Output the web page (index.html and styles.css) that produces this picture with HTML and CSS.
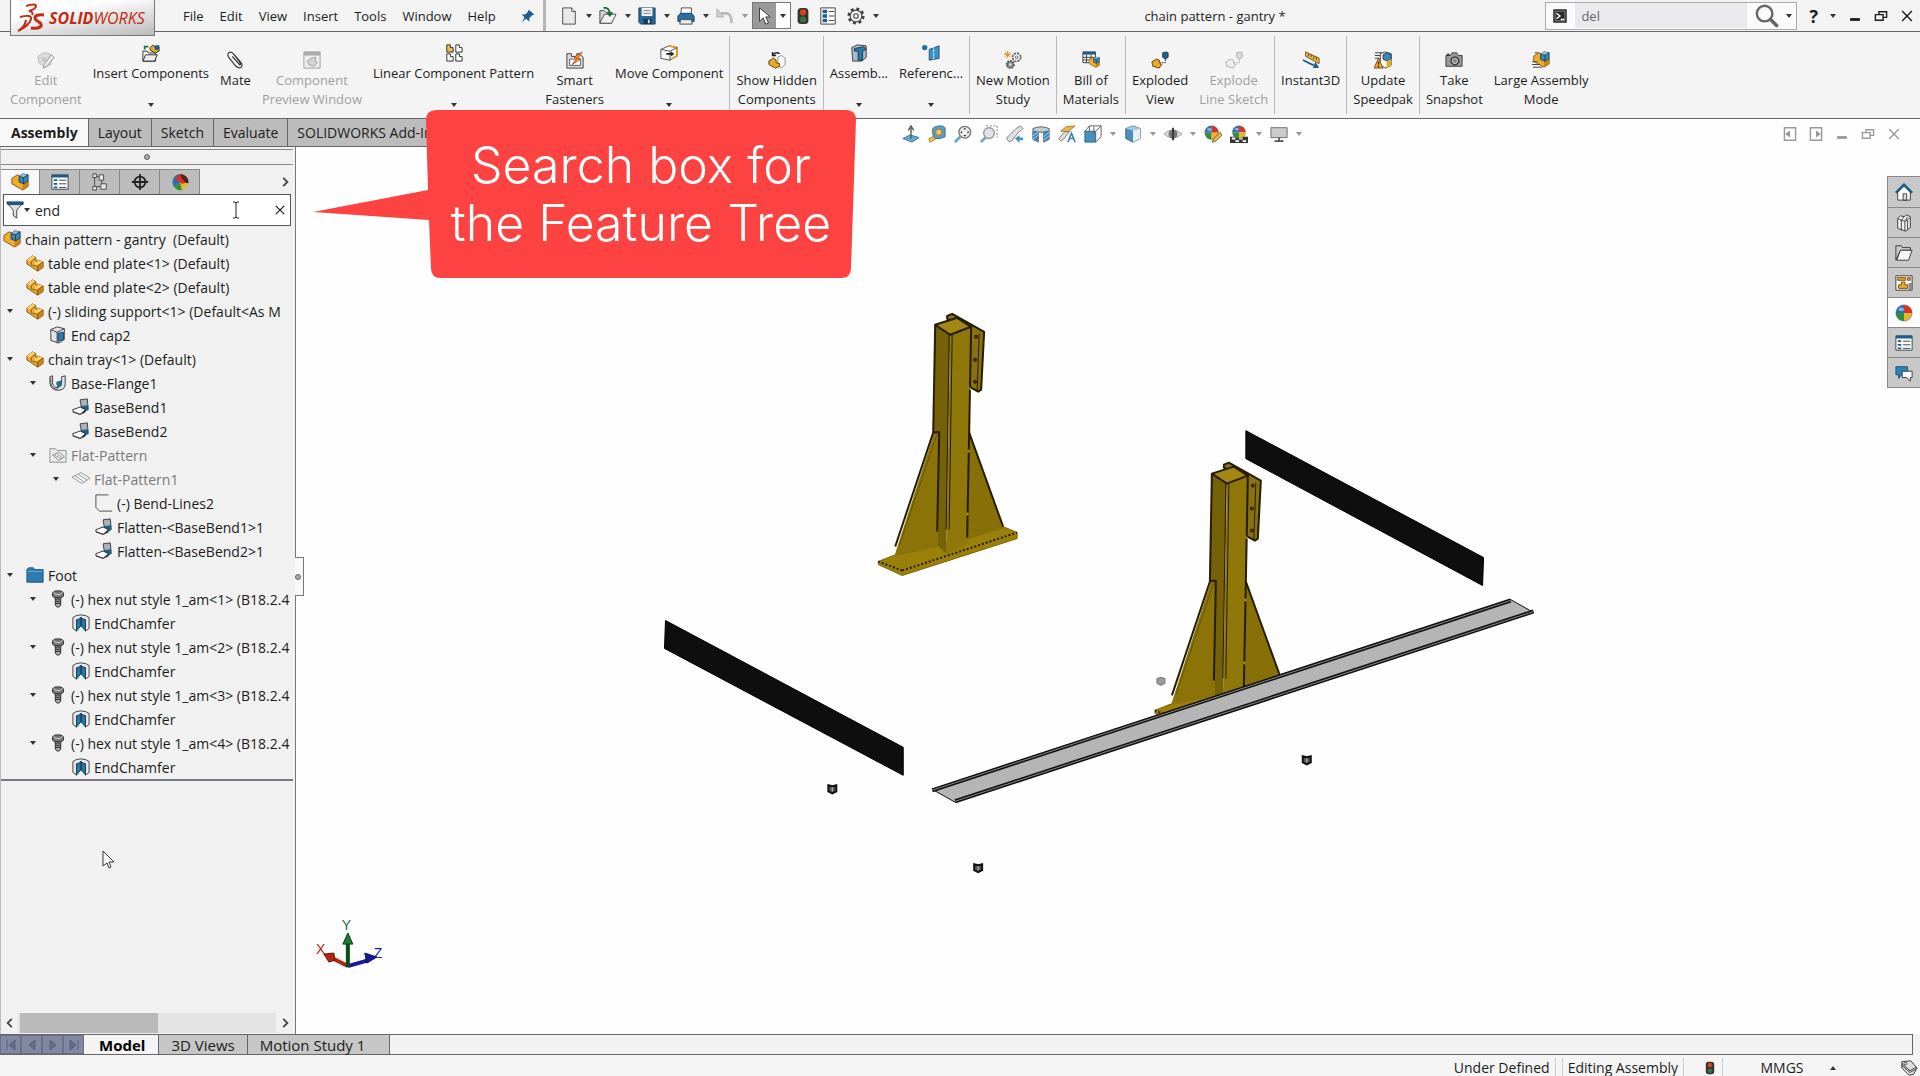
FILE: index.html
```html
<!DOCTYPE html>
<html lang="en">
<head>
    <meta charset="UTF-8">
    <meta name="viewport" content="width=device-width, initial-scale=1.0">
    <title>chain pattern - gantry *</title>
    <link rel="stylesheet" href="styles.css">
</head>
<body>
    <!-- Icon sprite -->
    <svg class="sprite" aria-hidden="true">
        <symbol id="i-part" viewBox="0 0 20 20">
            <path d="M1 7l6-5 4 2v4l3-1 5 2v6l-6 4L1 11z" fill="#f0ad2c" stroke="#7a4f0a" stroke-linejoin="round"/>
            <path d="M7 2l4 2-5 4-5-1zM14 7l5 2-6 4-5-2z" fill="#fbd06a"/>
            <path d="M13 13l6-4v6l-6 4z" fill="#c98412"/>
            <path d="M6 8l5-4M6 8v4l7 2M13 13v6M13 13l6-4" fill="none" stroke="#7a4f0a"/>
        </symbol>
        <symbol id="i-asm" viewBox="0 0 20 20">
            <path d="M1 6l6-4 4 2v4l8 1v6l-6 4L1 12z" fill="#f0ad2c" stroke="#7a4f0a" stroke-linejoin="round"/>
            <path d="M13 13l6-3v5l-6 4z" fill="#c98412"/>
            <path d="M9 4l4-3 6 1v7l-5 3-5-2z" fill="#3b87b8" stroke="#173a55" stroke-linejoin="round"/>
            <path d="M9 4l4-3 6 1-5 3z" fill="#8fc2e0"/>
            <path d="M9 4l5 1 5-3M14 5v7" fill="none" stroke="#173a55"/>
        </symbol>
        <symbol id="i-props" viewBox="0 0 20 20">
            <path d="M1 2h18v16H1z" fill="#fff" stroke="#2c3e50"/>
            <path d="M1 2h18v3H1z" fill="#1c5d8c"/>
            <path d="M3 7h4v2H3zM3 11h4v2H3zM3 15h4v2H3z" fill="#1c5d8c"/>
            <path d="M9 8h8M9 12h8M9 16h8" stroke="#333"/>
        </symbol>
        <symbol id="i-config" viewBox="0 0 20 20">
            <path d="M4 2v16M4 4h6M4 15h6" stroke="#444" fill="none"/>
            <path d="M2 1h4v4H2zM2 15h4v4H2zM9 2h5v6H9zM11 12h6v6h-6z" fill="#e6e6e6" stroke="#444"/>
            <path d="M12 8v4" stroke="#444"/>
        </symbol>
        <symbol id="i-target" viewBox="0 0 20 20">
            <circle cx="10" cy="10" r="6" fill="none" stroke="#222" stroke-width="2"/>
            <path d="M10 1v18M1 10h18" stroke="#222" stroke-width="2"/>
        </symbol>
        <symbol id="i-ball" viewBox="0 0 20 20">
            <path d="M10 10V1a9 9 0 0 0-9 9z" fill="#2a6fc4"/>
            <path d="M10 10h9a9 9 0 0 0-9-9z" fill="#d5342a"/>
            <path d="M10 10H1a9 9 0 0 0 9 9z" fill="#2f9238"/>
            <path d="M10 10v9a9 9 0 0 0 9-9z" fill="#eab42e"/>
            <circle cx="10" cy="10" r="9" fill="none" stroke="#444" stroke-opacity=".5"/>
            <ellipse cx="7" cy="6" rx="3" ry="2" fill="#fff" fill-opacity=".45"/>
        </symbol>
        <symbol id="i-display" viewBox="0 0 20 20">
            <circle cx="10" cy="10" r="9" fill="#eab42e"/>
            <path d="M10 10V1a9 9 0 0 0-6 15z" fill="#2a6fc4"/>
            <path d="M10 1a9 9 0 0 1 9 9l-6 2-8-4a9 9 0 0 1 5-7z" fill="#d5342a"/>
            <path d="M4 16l6-6 2 9a9 9 0 0 1-8-3z" fill="#2f9238"/>
            <path d="M11 2q8 1 8 9-5-1-8-9z" fill="#4a2a20" stroke="#222"/>
        </symbol>
        <symbol id="i-funnel" viewBox="0 0 20 20">
            <path d="M1 2h18l-7 8v9l-4-3v-6z" fill="#dfe3e6" stroke="#333"/>
            <path d="M1 1h18v3H2z" fill="#1c5d8c" stroke="#12405f"/>
        </symbol>
        <symbol id="i-cap" viewBox="0 0 20 20">
            <path d="M2 4l7-3 8 2v12l-6 4-9-3z" fill="#dfe4e8" stroke="#333" stroke-linejoin="round"/>
            <path d="M2 4l7 3v12M9 7l8-4" fill="none" stroke="#333"/>
            <path d="M10 8l6-1v8l-6 2z" fill="#2f7bad" stroke="#173a55"/>
        </symbol>
        <symbol id="i-flange" viewBox="0 0 20 20">
            <path d="M1 3l3-1v8q1 6 6 5 4-1 4-5V3l4-1v9q0 7-8 7-8 0-9-8z" fill="#dde3e7" stroke="#333"/>
            <path d="M2 4v6q1 7 8 7" fill="none" stroke="#555"/>
            <path d="M8 9l6-2v6l-5 2z" fill="#25698f"/>
        </symbol>
        <symbol id="i-bend" viewBox="0 0 20 20">
            <path d="M9 2l8-1 1 12-7 1z" fill="#aab3ba" stroke="#333"/>
            <path d="M10 9l8-1v5l-6 4-3-4z" fill="#1f5f8b"/>
            <path d="M1 13l8-3 6 3-6 5-8-3z" fill="#fff" stroke="#222" stroke-linejoin="round"/>
            <path d="M1 15l8 3 6-4v2l-6 3-8-3z" fill="#444"/>
        </symbol>
        <symbol id="i-flatfolder" viewBox="0 0 20 20">
            <path d="M1 3h6l2 2h10v13H1z" fill="#ebebeb" stroke="#8a8a8a"/>
            <path d="M4 10l7-3 6 5-6 4z" fill="#fff" stroke="#777"/>
            <path d="M6 10l7 4M9 9l6 4" stroke="#777"/>
        </symbol>
        <symbol id="i-flat" viewBox="0 0 20 20">
            <path d="M0 8l10-5 10 6-9 6z" fill="#f4f4f4" stroke="#909090"/>
            <path d="M3 6l10 7M7 5l10 6" stroke="#909090"/>
        </symbol>
        <symbol id="i-sketch" viewBox="0 0 20 20">
            <path d="M15 1H1v14l4 4h14" fill="none" stroke="#444"/>
        </symbol>
        <symbol id="i-folder" viewBox="0 0 20 20">
            <path d="M1 4l2-2h5l2 2h9v14H1z" fill="#2f7bad" stroke="#1a4f74"/>
            <path d="M2 6h16" stroke="#6fb0d8"/>
        </symbol>
        <symbol id="i-bolt" viewBox="0 0 20 20">
            <path d="M4 3l3-2h6l3 2v4l-3 2H7L4 7z" fill="#777" stroke="#222"/>
            <path d="M5 3l3 2h4l3-2" fill="none" stroke="#ddd"/>
            <path d="M7 9h6v8l-2 2H9l-2-2z" fill="#aaa" stroke="#222"/>
            <path d="M7 11h6M7 13h6M7 15h6" stroke="#222"/>
        </symbol>
        <symbol id="i-chamfer" viewBox="0 0 20 20">
            <path d="M1 4q3-3 9-3t9 3v12l-4 3V6h-2l-3-2-3 2H5v13l-4-3z" fill="#e7ebee" stroke="#333" stroke-linejoin="round"/>
            <path d="M5 8l5-4v9l-5 6zM15 8l-5-4v9l5 6z" fill="#2878aa" stroke="#173a55"/>
        </symbol>
        <symbol id="i-edit" viewBox="0 0 20 20">
            <path d="M1 6l6-4 7 1 3 4-2 8-6 3-7-5z" fill="#dcdcdc" stroke="#b5b5b5"/>
            <path d="M16 4l3 3-8 10-4 2 1-4z" fill="#eee" stroke="#8f8f8f"/>
            <path d="M5 7h5v5H5z" fill="#c9c9c9"/>
        </symbol>
        <symbol id="i-insert" viewBox="0 0 20 20">
            <path d="M1 8h5l1 2h8v9H1z" fill="#fff" stroke="#222"/>
            <path d="M4 12h13l-3 7H1z" fill="#eee" stroke="#222"/>
            <path d="M3 6V3h4" stroke="#137a3a" stroke-width="2" fill="none"/>
            <path d="M9 4l3-3 2 2h5v5l-4 2-6-3z" fill="#eba92a" stroke="#333"/>
            <path d="M13 2l6-1v5l-4 1z" fill="#1f5f8b"/>
        </symbol>
        <symbol id="i-clip" viewBox="0 0 20 20">
            <path d="M7 6l7 8q1 2 2 1 0-1-1-3L9 4Q6 0 3 2q-2 2 0 5l8 10q4 3 6 1 2-3-1-6L9 4" fill="none" stroke="#333" stroke-width="1.3"/>
        </symbol>
        <symbol id="i-preview" viewBox="0 0 20 20">
            <path d="M1 1h18v18H1z" fill="#eee" stroke="#999"/>
            <path d="M1 1h18v4H1z" fill="#aaa"/>
            <path d="M5 11l4-3 5-1v5l2 1-4 4-6-2z" fill="#d3d3d3" stroke="#999"/>
        </symbol>
        <symbol id="i-pattern" viewBox="0 0 20 20">
            <path d="M2 1h4v3h3v5H2z" fill="#f2c04c" stroke="#222"/>
            <path d="M12 1h4v3h3v5h-7zM2 11h4v3h3v5H2zM12 11h4v3h3v5h-7z" fill="#fff" stroke="#222"/>
        </symbol>
        <symbol id="i-smart" viewBox="0 0 20 20">
            <path d="M1 3h5v3h6V3h3l4 4v12H1z" fill="#ddd" stroke="#333"/>
            <path d="M4 9h12v7H4z" fill="#fff" stroke="#555"/>
            <path d="M18 1l-9 6 3 1-5 7 9-6-3-1z" fill="#f09a2a" stroke="#b34a12"/>
        </symbol>
        <symbol id="i-move" viewBox="0 0 20 20">
            <path d="M1 6l9-4 9 2v9l-8 5-10-2z" fill="#fff" stroke="#444"/>
            <path d="M10 2l9 2v9l-7 4" fill="none" stroke="#d99a24" stroke-width="2"/>
            <path d="M1 6l10 2v10M11 8l8-4" fill="none" stroke="#444"/>
            <path d="M7 11h6" stroke="#222" stroke-width="2"/>
            <path d="M12 8l4 3-4 3z" fill="#222"/>
        </symbol>
        <symbol id="i-hidden" viewBox="0 0 20 20">
            <path d="M11 7l4-2 4 3v7l-4 4-4-3z" fill="#fff" stroke="#888"/>
            <path d="M1 11l5-3 3 2v3l4 1v3l-5 2-7-4z" fill="#eba92a" stroke="#5a3a06"/>
            <path d="M5 5q3-5 8-2M5 1v4h4" fill="none" stroke="#222" stroke-width="1.5"/>
        </symbol>
        <symbol id="i-asmfeat" viewBox="0 0 20 20">
            <path d="M2 4l6-3 10 1v13l-5 4H3z" fill="#aebbc4" stroke="#333"/>
            <path d="M5 5l10-2 3 3-4 2v10H9V8H5z" fill="#2878aa" stroke="#153c57"/>
        </symbol>
        <symbol id="i-refgeo" viewBox="0 0 20 20">
            <circle cx="3" cy="4" r="3" fill="#1f6fa5"/>
            <path d="M8 6l11-4v14L8 18z" fill="#3e8fc2" stroke="#1c567d"/>
            <path d="M13 2v18" stroke="#fff" stroke-dasharray="3 1"/>
        </symbol>
        <symbol id="i-gear" viewBox="0 0 20 20">
            <circle cx="10" cy="10" r="8" fill="none" stroke="#444" stroke-width="3" stroke-dasharray="3.3 3"/>
            <circle cx="10" cy="10" r="6.5" fill="#f4f4f4" stroke="#444" stroke-width="1.3"/>
            <circle cx="10" cy="10" r="2.5" fill="#fff" stroke="#444" stroke-width="1.3"/>
        </symbol>
        <symbol id="i-motion" viewBox="0 0 20 20">
            <circle cx="14" cy="7" r="4.5" fill="#fff" stroke="#666" stroke-width="2" stroke-dasharray="2.5 1"/>
            <circle cx="14" cy="7" r="1.5" fill="none" stroke="#555"/>
            <circle cx="7" cy="15" r="4" fill="#888" stroke="#555" stroke-width="2" stroke-dasharray="2 1"/>
            <circle cx="7" cy="15" r="1.5" fill="#ddd"/>
            <path d="M4 0v8M0 4h8M1 1l6 6M7 1L1 7" stroke="#e08a1e"/>
        </symbol>
        <symbol id="i-bom" viewBox="0 0 20 20">
            <path d="M1 1h14v12H1z" fill="#fff" stroke="#333"/>
            <path d="M1 1h14v3H1z" fill="#1c5d8c"/>
            <path d="M1 7h14M1 10h14M5 4v9M10 4v9" stroke="#333"/>
            <use href="#i-asm" x="7" y="6" width="13" height="13"/>
        </symbol>
        <symbol id="i-explode" viewBox="0 0 20 20">
            <path d="M1 12l5-3 3 1 1 4 2 1-3 4-7-2z" fill="#eba92a" stroke="#5a3a06"/>
            <path d="M13 2l4-1 2 1v5l-3 2-3-2z" fill="#1f5f8b" stroke="#173a55"/>
            <path d="M16 9v4h-6" fill="none" stroke="#222" stroke-dasharray="2 1"/>
        </symbol>
        <symbol id="i-explodeline" viewBox="0 0 20 20">
            <path d="M1 12l5-3 3 1 1 4 2 1-3 4-7-2z" fill="#eee" stroke="#aaa"/>
            <path d="M13 2l4-1 2 1v5l-3 2-3-2z" fill="#ddd" stroke="#aaa"/>
            <path d="M16 9v4h-6" fill="none" stroke="#aaa" stroke-dasharray="2 1"/>
        </symbol>
        <symbol id="i-instant" viewBox="0 0 20 20">
            <path d="M4 1l15 7v6L4 6z" fill="#f2bd45" stroke="#6b4a10"/>
            <path d="M7 3v3M10 4v3M13 6v3M16 7v3" stroke="#333"/>
            <path d="M1 10l12 6" stroke="#1c5d8c" stroke-width="2"/>
            <path d="M12 19l7 0-4-7z" fill="#1c5d8c"/>
        </symbol>
        <symbol id="i-speedpak" viewBox="0 0 20 20">
            <path d="M1 2h8M1 5h6M1 8h5" stroke="#333"/>
            <path d="M7 3l5-2 7 2v13l-6 3-6-3z" fill="#fff" stroke="#333"/>
            <path d="M10 4l5-2 4 2v5l-5 2-4-2z" fill="#3b87b8" stroke="#173a55"/>
            <path d="M14 11l5-2v7l-5 3z" fill="#eba92a"/>
            <path d="M5 8l5 11H0z" fill="#f4a52a" stroke="#7a4a08"/>
            <path d="M5 12v3M5 16v2" stroke="#222" stroke-width="1.5"/>
        </symbol>
        <symbol id="i-camera" viewBox="0 0 20 20">
            <path d="M1 5h5l2-3h5l2 3h4v12H1z" fill="#999" stroke="#333"/>
            <circle cx="11" cy="11" r="5" fill="#333"/>
            <circle cx="11" cy="11" r="3" fill="#888" stroke="#ddd"/>
            <path d="M2 3h3v2H2z" fill="#333"/>
        </symbol>
        <symbol id="i-large" viewBox="0 0 20 20">
            <use href="#i-asm" x="1" width="19" height="19"/>
            <path d="M0 12h6M0 15h8M1 18h10M3 2h4" stroke="#333"/>
        </symbol>
        <symbol id="i-pin" viewBox="0 0 20 20">
            <path d="M11 1l8 7-3 1-4 4v5l-5-4-6 5 4-7-4-4h5l4-4z" fill="#1c5d8c"/>
        </symbol>
        <symbol id="i-new" viewBox="0 0 20 20">
            <path d="M3 1h10l4 4v14H3z" fill="#e9e9e9" stroke="#444"/>
            <path d="M13 1v4h4" fill="#fff" stroke="#444"/>
        </symbol>
        <symbol id="i-open" viewBox="0 0 20 20">
            <path d="M1 4h5l2 2h6v12H1z" fill="#d5d5d5" stroke="#444"/>
            <path d="M6 8h13l-5 10H1z" fill="#f2f2f2" stroke="#444"/>
            <path d="M5 1q6-1 7 6" fill="none" stroke="#17713a" stroke-width="2"/>
            <path d="M8 6h8l-4 5z" fill="#17713a"/>
        </symbol>
        <symbol id="i-save" viewBox="0 0 20 20">
            <path d="M1 1h18v18H3l-2-2z" fill="#26699a" stroke="#143a56"/>
            <path d="M4 1h12v9H4z" fill="#f2f2f2"/>
            <path d="M6 4h8M6 7h8" stroke="#777"/>
            <path d="M6 13h9v6H6z" fill="#173a52"/>
            <path d="M11 14h2v4h-2z" fill="#ddd"/>
        </symbol>
        <symbol id="i-print" viewBox="0 0 20 20">
            <path d="M5 1h11v8H4z" fill="#fff" stroke="#444"/>
            <path d="M1 10l3-3h12l3 3v6H1z" fill="#2a6f9f" stroke="#143a56"/>
            <path d="M4 14h12l1 5H3z" fill="#e9e9e9" stroke="#444"/>
        </symbol>
        <symbol id="i-undo" viewBox="0 0 20 20">
            <path d="M3 7h9q6 1 5 11" fill="none" stroke="#b9b9b9" stroke-width="3"/>
            <path d="M1 2v9h8z" fill="#cfcfcf" stroke="#b0b0b0"/>
        </symbol>
        <symbol id="i-cursor" viewBox="0 0 20 20">
            <path d="M5 1v15l4-4 3 7 3-1-3-7h5z" fill="#fff" stroke="#333"/>
        </symbol>
        <symbol id="i-traffic" viewBox="0 0 20 20">
            <rect x="4" y="1" width="12" height="18" rx="4" fill="#38332f"/>
            <circle cx="10" cy="6" r="3.4" fill="#d8401f"/>
            <circle cx="10" cy="14" r="3.4" fill="#2c7a3f"/>
        </symbol>
        <symbol id="i-options" viewBox="0 0 20 20">
            <path d="M2 1h16v18H2z" fill="#fff" stroke="#333"/>
            <path d="M4 3h5v4H4zM4 8h5v4H4zM4 13h5v4H4z" fill="#1c5d8c"/>
            <path d="M11 5h6M11 10h6M11 15h6" stroke="#333"/>
        </symbol>
        <symbol id="i-console" viewBox="0 0 20 20">
            <path d="M1 1h18v18H1z" fill="#2b2b2b" stroke="#111"/>
            <path d="M3 3h14v14H3z" fill="none" stroke="#aaa"/>
            <path d="M5 6l5 4-5 4M11 15h5" stroke="#fff" stroke-width="2" fill="none"/>
        </symbol>
        <symbol id="i-search" viewBox="0 0 20 20">
            <circle cx="8" cy="8" r="6.5" fill="none" stroke="#666" stroke-width="2"/>
            <path d="M13 13l5 5" stroke="#666" stroke-width="3" stroke-linecap="round"/>
        </symbol>
        <symbol id="i-min" viewBox="0 0 20 20"><path d="M3 13h14v4H3z" fill="currentColor"/></symbol>
        <symbol id="i-restore" viewBox="0 0 20 20">
            <path d="M2 8h11v8H2zM7 8V4h11v8h-5" fill="none" stroke="currentColor" stroke-width="2"/>
        </symbol>
        <symbol id="i-close" viewBox="0 0 20 20">
            <path d="M3 3l14 14M17 3L3 17" stroke="currentColor" stroke-width="2"/>
        </symbol>
        <symbol id="i-paneleft" viewBox="0 0 20 20">
            <path d="M2 1h16v18H2z" fill="none" stroke="currentColor" stroke-width="2"/>
            <path d="M10 5v10l-7-5z" fill="currentColor"/>
        </symbol>
        <symbol id="i-paneright" viewBox="0 0 20 20">
            <path d="M2 1h16v18H2z" fill="none" stroke="currentColor" stroke-width="2"/>
            <path d="M10 5v10l7-5z" fill="currentColor"/>
        </symbol>
        <symbol id="i-chevleft" viewBox="0 0 20 20"><path d="M13 3l-7 7 7 7" fill="none" stroke="#444" stroke-width="3"/></symbol>
        <symbol id="i-chevright" viewBox="0 0 20 20"><path d="M7 3l7 7-7 7" fill="none" stroke="#444" stroke-width="3"/></symbol>
        <!-- Heads-up view toolbar -->
        <symbol id="h-normal" viewBox="0 0 20 20">
            <path d="M1 15l8-4 10 3-8 5z" fill="#6ba6cf" stroke="#3a7197"/>
            <path d="M10 15V3M7 6l3-5 3 5" fill="none" stroke="#555" stroke-width="1.5"/>
        </symbol>
        <symbol id="h-tape" viewBox="0 0 20 20">
            <path d="M5 5q1-4 9-4 5 0 5 3v9q-5 3-13 2z" fill="#5b9cc9" stroke="#38668a"/>
            <circle cx="12" cy="8" r="3.5" fill="#f0c65a" stroke="#a77a1d"/>
            <path d="M1 15l6-2 1 3-6 3z" fill="#f0c65a" stroke="#a77a1d"/>
        </symbol>
        <symbol id="h-fit" viewBox="0 0 20 20">
            <path d="M7 13l-6 6" stroke="#6ba6cf" stroke-width="3"/>
            <circle cx="12" cy="8" r="6.5" fill="#f3f3f3" stroke="#777" stroke-width="1.5"/>
            <path d="M12 3l2 2h-4zM12 13l2-2h-4zM7 8l2-2v4zM17 8l-2-2v4z" fill="#444"/>
        </symbol>
        <symbol id="h-area" viewBox="0 0 20 20">
            <path d="M7 1h12v13" fill="none" stroke="#666" stroke-dasharray="2 2"/>
            <path d="M6 14l-5 5" stroke="#6ba6cf" stroke-width="3"/>
            <circle cx="10" cy="9" r="6" fill="#dfe1e6" stroke="#999" stroke-width="1.5"/>
        </symbol>
        <symbol id="h-prev" viewBox="0 0 20 20">
            <path d="M1 14l10-10 5-3 3 3-5 4-8 10q-4 2-5-4z" fill="#e0e0e0" stroke="#777"/>
            <path d="M10 15l5-4v3h4v3h-4v3z" fill="#4b93c3"/>
        </symbol>
        <symbol id="h-section" viewBox="0 0 20 20">
            <path d="M1 4q9-4 18 0v12l-6 3V8H7v11l-6-3z" fill="#c3cdd5" stroke="#555"/>
            <path d="M1 6l6 1v11l-6-2zM13 7l6-1v10l-6 2z" fill="#3f85b5"/>
            <path d="M1 12l6-4M1 16l6-5M13 13l6-5M13 17l6-5" stroke="#bfe0f5"/>
        </symbol>
        <symbol id="h-annot" viewBox="0 0 20 20">
            <path d="M3 7l6-5 10-1-7 6z" fill="#eeb452" stroke="#a97524"/>
            <path d="M1 15l6-7 6-1-7 9q-4 3-5-1z" fill="#ddd" stroke="#777"/>
            <path d="M11 19l4-10 4 10M12 15h6" fill="none" stroke="#3f85b5" stroke-width="1.8"/>
        </symbol>
        <symbol id="h-orient" viewBox="0 0 20 20">
            <path d="M1 7h12v12H1z" fill="#4b8fbd" stroke="#2a5f85"/>
            <path d="M1 7l5-6h13v12l-6 6M13 7l6-6M6 1v6M11 2v8" fill="none" stroke="#555"/>
        </symbol>
        <symbol id="h-style" viewBox="0 0 20 20">
            <path d="M2 4l8-3 8 3v11l-8 4-8-4z" fill="#4b8fbd" stroke="#2a5f85"/>
            <path d="M10 6l8-2v11l-8 4z" fill="#e8eef2"/>
            <path d="M2 4l8 2 8-2-8-3z" fill="#a8cce3"/>
        </symbol>
        <symbol id="h-eye" viewBox="0 0 20 20">
            <path d="M0 10q10-9 20 0-10 9-20 0z" fill="#ddd" stroke="#999"/>
            <circle cx="10" cy="10" r="5" fill="#777"/>
            <path d="M10 3v14" stroke="#333" stroke-width="2"/>
        </symbol>
        <symbol id="h-appear" viewBox="0 0 20 20">
            <use href="#i-ball" width="17" height="17"/>
            <path d="M18 8l2 3-7 7-4 1 2-4z" fill="#efb65b" stroke="#7a5a24"/>
        </symbol>
        <symbol id="h-scene" viewBox="0 0 20 20">
            <path d="M0 13h20v7H0z" fill="#333"/>
            <path d="M2 14h4v2H2zM10 14h4v2h-4zM6 17h4v2H6zM14 17h4v2h-4z" fill="#fff"/>
            <use href="#i-ball" x="2" width="16" height="16"/>
        </symbol>
        <symbol id="h-screen" viewBox="0 0 20 20">
            <path d="M1 3h18v11H1z" fill="#ccc" stroke="#666"/>
            <path d="M9 14h2v3h4v2H5v-2h4z" fill="#555"/>
        </symbol>
        <!-- Task pane -->
        <symbol id="t-home" viewBox="0 0 20 20">
            <path d="M3 10v9h14v-9l-7-7z" fill="#fff" stroke="#333"/>
            <path d="M9 12h4v7H9z" fill="#ddd" stroke="#333"/>
            <path d="M1 11l9-9 9 9" fill="none" stroke="#1c5d8c" stroke-width="3"/>
        </symbol>
        <symbol id="t-library" viewBox="0 0 20 20">
            <path d="M3 5l3-3 4 1 3-2 4 2v12l-5 4-9-3z" fill="#f2f2f2" stroke="#333"/>
            <path d="M3 5l4 2v11M7 7l3-4M7 7l4 1v11M11 8l3-5M12 8l5-4M14 7v10" fill="none" stroke="#333"/>
        </symbol>
        <symbol id="t-folder" viewBox="0 0 20 20">
            <path d="M1 2h6l1 2h9v3H6L1 18z" fill="#ccc" stroke="#333"/>
            <path d="M6 7h13l-4 11H2z" fill="#f5f5f5" stroke="#333"/>
        </symbol>
        <symbol id="t-palette" viewBox="0 0 20 20">
            <path d="M1 2h18v16H1z" fill="#fff" stroke="#333"/>
            <path d="M3 4h9v3H3zM14 4h3v3h-3zM7 9h4v3h3v4H4v-4h3z" fill="#eba92a" stroke="#6e4708"/>
            <path d="M15 10h4v8h-4z" fill="#888"/>
        </symbol>
        <symbol id="t-forum" viewBox="0 0 20 20">
            <path d="M1 3h13v9H7l-3 4v-4H1z" fill="#2f83b4" stroke="#1a4f74"/>
            <path d="M8 8h11v7h-2v4l-4-4H8z" fill="#fff" stroke="#333"/>
        </symbol>
        <symbol id="i-tag" viewBox="0 0 20 20">
            <path d="M2 3l10-1 7 8-4 7-5 1-8-8z" fill="#ddd" stroke="#333"/>
            <path d="M2 7l9 8 7-4M2 5l9 8 7-4" fill="none" stroke="#333"/>
            <circle cx="6" cy="5" r="1.5" fill="#fff" stroke="#333"/>
        </symbol>
    </svg>

    <header class="titlebar">
        <div class="logo">
            <svg class="logo-mark" viewBox="0 0 28 30" aria-hidden="true">
                <path d="M9 3q10-3 10 0 0 3-7 5 5 1 3 4" fill="none" stroke="#c22a12" stroke-width="2"/>
                <path d="M3 14q12-3 11 2-1 6-13 12 7-4 8-11" fill="none" stroke="#c22a12" stroke-width="2"/>
                <path d="M27 12q-9-1-9 3 0 2 4 4 4 3 1 5-3 2-9 1" fill="none" stroke="#c22a12" stroke-width="3"/>
            </svg>
            <span class="logo-text"><b>SOLID</b>WORKS</span>
        </div>
        <nav class="menu">
            <button>File</button>
            <button>Edit</button>
            <button>View</button>
            <button>Insert</button>
            <button>Tools</button>
            <button>Window</button>
            <button>Help</button>
            <button class="pin" aria-label="Pin menu"><svg class="icon-sm"><use href="#i-pin"/></svg></button>
        </nav>
        <div class="quick">
            <button aria-label="New"><svg class="icon"><use href="#i-new"/></svg><i class="caret"></i></button>
            <button aria-label="Open"><svg class="icon"><use href="#i-open"/></svg><i class="caret"></i></button>
            <button aria-label="Save"><svg class="icon"><use href="#i-save"/></svg><i class="caret"></i></button>
            <button aria-label="Print"><svg class="icon"><use href="#i-print"/></svg><i class="caret"></i></button>
            <button aria-label="Undo"><svg class="icon"><use href="#i-undo"/></svg><i class="caret grey"></i></button>
            <button class="select-tool" aria-label="Select"><span><svg class="icon"><use href="#i-cursor"/></svg></span><i class="caret"></i></button>
            <button class="tight" aria-label="Rebuild"><svg class="icon"><use href="#i-traffic"/></svg></button>
            <button class="tight" aria-label="File properties"><svg class="icon"><use href="#i-options"/></svg></button>
            <button class="tight" aria-label="Options"><svg class="icon"><use href="#i-gear"/></svg><i class="caret"></i></button>
        </div>
        <h1 class="doc-title">chain pattern - gantry *</h1>
        <div class="cmd-search">
            <svg class="icon-sm"><use href="#i-console"/></svg>
            <input type="text" value="del" aria-label="Search commands">
            <button aria-label="Search"><svg class="icon-lg"><use href="#i-search"/></svg><i class="caret"></i></button>
        </div>
        <div class="win-controls">
            <button class="help">?<i class="caret"></i></button>
            <button aria-label="Minimize"><svg class="icon-sm"><use href="#i-min"/></svg></button>
            <button aria-label="Restore"><svg class="icon-sm"><use href="#i-restore"/></svg></button>
            <button aria-label="Close"><svg class="icon-sm"><use href="#i-close"/></svg></button>
        </div>
    </header>

    <div class="ribbon">
        <div class="group">
            <button class="cmd" disabled><svg class="icon"><use href="#i-edit"/></svg>Edit<br>Component</button>
            <button class="cmd drop"><svg class="icon"><use href="#i-insert"/></svg>Insert Components<i class="caret"></i></button>
            <button class="cmd"><svg class="icon"><use href="#i-clip"/></svg>Mate</button>
            <button class="cmd" disabled><svg class="icon"><use href="#i-preview"/></svg>Component<br>Preview Window</button>
            <button class="cmd drop"><svg class="icon"><use href="#i-pattern"/></svg>Linear Component Pattern<i class="caret"></i></button>
            <button class="cmd"><svg class="icon"><use href="#i-smart"/></svg>Smart<br>Fasteners</button>
            <button class="cmd drop"><svg class="icon"><use href="#i-move"/></svg>Move Component<i class="caret"></i></button>
        </div>
        <div class="group">
            <button class="cmd"><svg class="icon"><use href="#i-hidden"/></svg>Show Hidden<br>Components</button>
        </div>
        <div class="group">
            <button class="cmd drop"><svg class="icon"><use href="#i-asmfeat"/></svg>Assemb...<i class="caret"></i></button>
            <button class="cmd drop"><svg class="icon"><use href="#i-refgeo"/></svg>Referenc...<i class="caret"></i></button>
        </div>
        <div class="group">
            <button class="cmd"><svg class="icon"><use href="#i-motion"/></svg>New Motion<br>Study</button>
        </div>
        <div class="group">
            <button class="cmd"><svg class="icon"><use href="#i-bom"/></svg>Bill of<br>Materials</button>
        </div>
        <div class="group">
            <button class="cmd"><svg class="icon"><use href="#i-explode"/></svg>Exploded<br>View</button>
            <button class="cmd" disabled><svg class="icon"><use href="#i-explodeline"/></svg>Explode<br>Line Sketch</button>
        </div>
        <div class="group">
            <button class="cmd"><svg class="icon"><use href="#i-instant"/></svg>Instant3D</button>
        </div>
        <div class="group">
            <button class="cmd"><svg class="icon"><use href="#i-speedpak"/></svg>Update<br>Speedpak</button>
        </div>
        <div class="group">
            <button class="cmd"><svg class="icon"><use href="#i-camera"/></svg>Take<br>Snapshot</button>
            <button class="cmd"><svg class="icon"><use href="#i-large"/></svg>Large Assembly<br>Mode</button>
        </div>
    </div>

    <div class="subbar">
        <div class="tabs">
            <button class="tab active">Assembly</button>
            <button class="tab">Layout</button>
            <button class="tab">Sketch</button>
            <button class="tab">Evaluate</button>
            <button class="tab">SOLIDWORKS Add-Ins</button>
        </div>
        <div class="hud">
            <button aria-label="Normal to"><svg class="icon"><use href="#h-normal"/></svg></button>
            <button aria-label="Measure"><svg class="icon"><use href="#h-tape"/></svg></button>
            <button aria-label="Zoom to fit"><svg class="icon"><use href="#h-fit"/></svg></button>
            <button aria-label="Zoom to area"><svg class="icon"><use href="#h-area"/></svg></button>
            <button aria-label="Previous view"><svg class="icon"><use href="#h-prev"/></svg></button>
            <button aria-label="Section view"><svg class="icon"><use href="#h-section"/></svg></button>
            <button aria-label="Annotation views"><svg class="icon"><use href="#h-annot"/></svg></button>
            <button aria-label="View orientation"><svg class="icon"><use href="#h-orient"/></svg><i class="caret grey"></i></button>
            <button aria-label="Display style"><svg class="icon"><use href="#h-style"/></svg><i class="caret grey"></i></button>
            <button aria-label="Hide/show items"><svg class="icon"><use href="#h-eye"/></svg><i class="caret grey"></i></button>
            <button aria-label="Edit appearance"><svg class="icon"><use href="#h-appear"/></svg></button>
            <button aria-label="Apply scene"><svg class="icon"><use href="#h-scene"/></svg><i class="caret grey"></i></button>
            <button aria-label="View settings"><svg class="icon"><use href="#h-screen"/></svg><i class="caret grey"></i></button>
        </div>
        <div class="doc-controls">
            <button aria-label="Pane left"><svg class="icon-sm"><use href="#i-paneleft"/></svg></button>
            <button aria-label="Pane right"><svg class="icon-sm"><use href="#i-paneright"/></svg></button>
            <button aria-label="Minimize document"><svg class="icon-sm"><use href="#i-min"/></svg></button>
            <button aria-label="Restore document"><svg class="icon-sm"><use href="#i-restore"/></svg></button>
            <button aria-label="Close document"><svg class="icon-sm"><use href="#i-close"/></svg></button>
        </div>
    </div>

    <main class="workspace">
        <aside class="panel">
            <div class="grip"><span class="dot"></span></div>
            <div class="panel-tabs">
                <button class="ptab active" aria-label="Feature tree"><svg class="icon"><use href="#i-asm"/></svg></button>
                <button class="ptab" aria-label="Properties"><svg class="icon"><use href="#i-props"/></svg></button>
                <button class="ptab" aria-label="Configurations"><svg class="icon"><use href="#i-config"/></svg></button>
                <button class="ptab" aria-label="DimXpert"><svg class="icon"><use href="#i-target"/></svg></button>
                <button class="ptab" aria-label="Display"><svg class="icon"><use href="#i-display"/></svg></button>
                <button class="more" aria-label="More"><svg class="icon-xs"><use href="#i-chevright"/></svg></button>
            </div>
            <div class="filter">
                <svg class="icon"><use href="#i-funnel"/></svg><i class="caret"></i>
                <input type="text" value="end" aria-label="Filter tree">
                <button aria-label="Clear"><svg class="icon-xs"><use href="#i-close"/></svg></button>
            </div>
            <ul class="tree">
                <li class="lv0"><svg class="icon"><use href="#i-asm"/></svg>chain pattern - gantry&nbsp; (Default)</li>
                <li class="lv1"><i></i><svg class="icon"><use href="#i-part"/></svg>table end plate&lt;1&gt; (Default)</li>
                <li class="lv1"><i></i><svg class="icon"><use href="#i-part"/></svg>table end plate&lt;2&gt; (Default)</li>
                <li class="lv1"><i class="caret"></i><svg class="icon"><use href="#i-part"/></svg>(-) sliding support&lt;1&gt; (Default&lt;As M</li>
                <li class="lv2"><i></i><svg class="icon"><use href="#i-cap"/></svg>End cap2</li>
                <li class="lv1"><i class="caret"></i><svg class="icon"><use href="#i-part"/></svg>chain tray&lt;1&gt; (Default)</li>
                <li class="lv2"><i class="caret"></i><svg class="icon"><use href="#i-flange"/></svg>Base-Flange1</li>
                <li class="lv3"><i></i><svg class="icon"><use href="#i-bend"/></svg>BaseBend1</li>
                <li class="lv3"><i></i><svg class="icon"><use href="#i-bend"/></svg>BaseBend2</li>
                <li class="lv2 dim"><i class="caret"></i><svg class="icon"><use href="#i-flatfolder"/></svg>Flat-Pattern</li>
                <li class="lv3 dim"><i class="caret"></i><svg class="icon"><use href="#i-flat"/></svg>Flat-Pattern1</li>
                <li class="lv4"><i></i><svg class="icon"><use href="#i-sketch"/></svg>(-) Bend-Lines2</li>
                <li class="lv4"><i></i><svg class="icon"><use href="#i-bend"/></svg>Flatten-&lt;BaseBend1&gt;1</li>
                <li class="lv4"><i></i><svg class="icon"><use href="#i-bend"/></svg>Flatten-&lt;BaseBend2&gt;1</li>
                <li class="lv1"><i class="caret"></i><svg class="icon"><use href="#i-folder"/></svg>Foot</li>
                <li class="lv2"><i class="caret"></i><svg class="icon"><use href="#i-bolt"/></svg>(-) hex nut style 1_am&lt;1&gt; (B18.2.4</li>
                <li class="lv3"><i></i><svg class="icon"><use href="#i-chamfer"/></svg>EndChamfer</li>
                <li class="lv2"><i class="caret"></i><svg class="icon"><use href="#i-bolt"/></svg>(-) hex nut style 1_am&lt;2&gt; (B18.2.4</li>
                <li class="lv3"><i></i><svg class="icon"><use href="#i-chamfer"/></svg>EndChamfer</li>
                <li class="lv2"><i class="caret"></i><svg class="icon"><use href="#i-bolt"/></svg>(-) hex nut style 1_am&lt;3&gt; (B18.2.4</li>
                <li class="lv3"><i></i><svg class="icon"><use href="#i-chamfer"/></svg>EndChamfer</li>
                <li class="lv2"><i class="caret"></i><svg class="icon"><use href="#i-bolt"/></svg>(-) hex nut style 1_am&lt;4&gt; (B18.2.4</li>
                <li class="lv3"><i></i><svg class="icon"><use href="#i-chamfer"/></svg>EndChamfer</li>
            </ul>
            <div class="hscroll">
                <button aria-label="Scroll left"><svg class="icon-xs"><use href="#i-chevleft"/></svg></button>
                <div class="track"><div class="thumb"></div></div>
                <button aria-label="Scroll right"><svg class="icon-xs"><use href="#i-chevright"/></svg></button>
            </div>
            <div class="splitter"><span class="dot"></span></div>
            <svg class="pointer" viewBox="0 0 12 19"><path d="M1 1v15l4-3 2 5 2-1-2-5h5z" fill="#fff" stroke="#333"/></svg>
            <svg class="ibeam" viewBox="0 0 8 18"><path d="M1 1h2l1 1 1-1h2M4 2v14M1 17h2l1-1 1 1h2" fill="none" stroke="#222"/></svg>
        </aside>

        <div class="viewport">
            <svg class="scene" viewBox="296 147 1624 888" role="img" aria-label="Gantry model">
                <!-- cable guards -->
                <path d="M1246 431l238 127-1 28-237-127z" fill="#0e0e0e" stroke="#000"/>
                <path d="M665 621l238 127v28L664 649z" fill="#0e0e0e" stroke="#000"/>
                <!-- support column -->
                <g id="column" stroke="#241d02" stroke-linejoin="round">
                    <path d="M947 316l5-2 32 18-3 58-3 2-9-5 1-56-23-12z" fill="#8a7110" stroke-width="2"/>
                    <path d="M979 334l-2 57" fill="none"/>
                    <path d="M878 562l15-6 110-29 14 6v6l-115 37-24-11z" fill="#9a7f09" stroke="#7a6507"/>
                    <path d="M902 571l115-38M902 571l-24-9" fill="none" stroke-width="2" stroke-dasharray="2 2"/>
                    <path d="M969 433l34 96-36 11z" fill="#877008" stroke="none"/>
                    <path d="M969 433l34 94" fill="none" stroke-width="2"/>
                    <path d="M935 325l-3 216 14 13 4-220z" fill="#756107" stroke="none"/>
                    <path d="M935 325l-2 108" fill="none" stroke-width="2"/>
                    <path d="M950 335l-4 220 21-11 4-217z" fill="#8f7709" stroke="none"/>
                    <path d="M971 327l-2 106-2 105" fill="none" stroke-width="2" stroke-dasharray="60 3"/>
                    <path d="M935 325l22-7 14 9-21 8z" fill="#a38713" stroke-width="2"/>
                    <path d="M949 335l-3 195M952 335l-3 195" fill="none"/>
                    <path d="M934 433l5-1-1 115-44 10z" fill="#8b7308" stroke="none"/>
                    <path d="M939 432l-2 100M933 433l-38 114M933 433l6-1" fill="none" stroke-width="2"/>
                    <path d="M937 434l-38 112" fill="none" stroke="#655407"/>
                    <circle cx="976" cy="337" r="1.5" fill="#4d2e0a"/>
                    <circle cx="975" cy="360" r="1.5" fill="#4d2e0a"/>
                    <circle cx="975" cy="382" r="1.5" fill="#4d2e0a"/>
                </g>
                <use href="#column" x="277" y="149"/>
                <!-- chain tray -->
                <path d="M932 790l579-190 23 13-579 190z" fill="#b5b5b5" stroke="#111"/>
                <path d="M932 791l579-190M955 802l579-190" fill="none" stroke="#111" stroke-width="4"/>
                <path d="M932 791l579-190M955 802l579-190" fill="none" stroke="#8a8a8a"/>
                <!-- hex nuts -->
                <path d="M1157 679l4-1 4 1v5l-4 2-4-2z" fill="#999" stroke="#777"/>
                <g id="nut">
                    <path d="M828 786l4 1 4-1v6l-4 2-4-2z" fill="#555" stroke="#111" stroke-width="2"/>
                    <path d="M832 788v4" stroke="#ccc"/>
                </g>
                <use href="#nut" x="146" y="79"/>
                <use href="#nut" x="475" y="-29"/>
                <!-- axis triad -->
                <path d="M347 967l-14-7" stroke="#b52410" stroke-width="4"/>
                <path d="M323 955l10-1 1 7-6 2z" fill="#b52410" stroke="#5f1408"/>
                <path d="M347 967l21-6" stroke="#151c9c" stroke-width="4"/>
                <path d="M376 958l-12-4 2 10z" fill="#151c9c" stroke="#0b0f55"/>
                <path d="M347 968v-26" stroke="#0a4d14" stroke-width="4"/>
                <path d="M347 934l-5 11h10z" fill="#1c7a34" stroke="#0a3d10"/>
                <text class="axis ax-y" x="341" y="931">Y</text>
                <text class="axis ax-x" x="315" y="955">X</text>
                <text class="axis ax-z" x="373" y="959">Z</text>
            </svg>
        </div>

        <div class="task-pane">
            <button aria-label="Resources"><svg class="icon"><use href="#t-home"/></svg></button>
            <button aria-label="Design library"><svg class="icon"><use href="#t-library"/></svg></button>
            <button aria-label="File explorer"><svg class="icon"><use href="#t-folder"/></svg></button>
            <button aria-label="View palette"><svg class="icon"><use href="#t-palette"/></svg></button>
            <button class="active" aria-label="Appearances"><svg class="icon"><use href="#i-ball"/></svg></button>
            <button aria-label="Custom properties"><svg class="icon"><use href="#i-props"/></svg></button>
            <button aria-label="Forum"><svg class="icon"><use href="#t-forum"/></svg></button>
        </div>

        <div class="callout">
            <svg class="callout-shape" viewBox="0 0 544 168" aria-hidden="true">
                <path d="M124 0h409q10 0 10 10l-5 148q0 10-10 10H128q-10 0-10-10l-2-48L0 102l115-22-2-70q0-10 11-10z" fill="#fd4242"/>
            </svg>
            <p>Search box for<br>the Feature Tree</p>
        </div>
    </main>

    <div class="bottom-tabs">
        <div class="nav-btns">
            <button aria-label="First"><svg class="icon-sm"><path d="M3 2v10M11 2v10L5 7z"/></svg></button>
            <button aria-label="Previous"><svg class="icon-sm"><path d="M10 2v10L4 7z"/></svg></button>
            <button aria-label="Next"><svg class="icon-sm"><path d="M4 2v10l6-5z"/></svg></button>
            <button aria-label="Last"><svg class="icon-sm"><path d="M11 2v10M3 2v10l6-5z"/></svg></button>
        </div>
        <button class="btab active">Model</button>
        <button class="btab">3D Views</button>
        <button class="btab">Motion Study 1</button>
    </div>

    <footer class="status">
        <span>Under Defined</span>
        <span class="gap"></span>
        <span>Editing Assembly</span>
        <span class="light"><svg class="icon-sm"><use href="#i-traffic"/></svg></span>
        <button class="units">MMGS<i class="caret up"></i></button>
        <svg class="icon"><use href="#i-tag"/></svg>
    </footer>
</body>
</html>
```
FILE: styles.css
```css
* {
    box-sizing: border-box;
}
body {
    margin: 0;
    height: 100vh;
    overflow: hidden;
    display: flex;
    flex-direction: column;
    font-family: "Open Sans", "Noto Sans", sans-serif;
    font-size: 14px;
    color: #1c1c1c;
    background: #f2f2f2;
}
button {
    display: flex;
    align-items: center;
    justify-content: center;
    padding: 0;
    border: none;
    background: none;
    font: inherit;
    color: inherit;
}
input {
    border: none;
    outline: none;
    padding: 0;
    min-width: 0;
    font: inherit;
    color: inherit;
    background: none;
}
svg {
    flex: none;
}
.sprite {
    position: absolute;
    width: 0;
    height: 0;
}
.icon {
    width: 18px;
    height: 18px;
}
.icon-lg {
    width: 24px;
    height: 24px;
}
.icon-sm {
    width: 14px;
    height: 14px;
}
.icon-xs {
    width: 12px;
    height: 12px;
}
.caret {
    flex: none;
    width: 0;
    height: 0;
    border-left: 3px solid transparent;
    border-right: 3px solid transparent;
    border-top: 4px solid #333;
}
.caret.grey {
    border-top-color: #999;
}
.caret.up {
    border-top: none;
    border-bottom: 4px solid #333;
}
.dot {
    width: 6px;
    height: 6px;
    border: 1px solid #666;
    border-radius: 50%;
    background: #aaa;
}

/* Title bar */
.titlebar {
    flex: none;
    display: flex;
    align-items: center;
    height: 32px;
    padding-left: 10px;
    border-bottom: 1px solid #666;
    font-size: 13px;
    background: #f3f3f3;
}
.logo {
    display: flex;
    align-items: center;
    align-self: flex-start;
    gap: 4px;
    z-index: 1;
    width: 145px;
    height: 36px;
    padding-left: 6px;
    border: 1px solid #777;
    border-top: none;
    background: linear-gradient(170deg, #fff 30%, #bbb);
}
.logo-mark {
    width: 28px;
    height: 30px;
}
.logo-text {
    font-size: 16px;
    font-style: italic;
    color: #c22a12;
}
.menu {
    display: flex;
    gap: 16px;
    height: 31px;
    padding: 1px 8px 0 28px;
    border-right: 3px solid #b5b5b5;
}
.menu .pin {
    margin: 0 0 0 9px;
}
.quick {
    display: flex;
    align-items: center;
    padding-left: 11px;
}
.quick button {
    gap: 8px;
    width: 39px;
    height: 27px;
}
.quick .select-tool {
    gap: 4px;
    border: 1px solid #777;
    padding-right: 4px;
    background: #fff;
}
.select-tool span {
    display: flex;
    align-items: center;
    justify-content: center;
    width: 26px;
    height: 25px;
    background: #999;
}
.quick .tight {
    width: 25px;
}
.quick .tight:last-child {
    width: 44px;
}
.doc-title {
    flex: 1;
    margin: 0;
    text-align: center;
    font-size: 13px;
    font-weight: normal;
}
.cmd-search {
    display: flex;
    align-items: center;
    gap: 8px;
    width: 252px;
    height: 28px;
    padding: 0 4px 0 7px;
    border: 1px solid #aaa;
    background: #fafafa;
}
.cmd-search input {
    flex: 1;
    height: 25px;
    padding-left: 6px;
    color: #666;
    background: #e9e9ee;
}
.cmd-search button {
    gap: 7px;
}
.win-controls {
    display: flex;
    gap: 12px;
    padding: 0 6px 0 12px;
}
.win-controls .help {
    gap: 12px;
    font-size: 18px;
    font-weight: bold;
    line-height: 20px;
}

/* Ribbon */
.ribbon {
    flex: none;
    display: flex;
    height: 87px;
    padding: 4px;
    border-bottom: 1px solid #666;
    font-size: 13px;
    line-height: 19px;
    background: #f4f4f4;
}
.group {
    display: flex;
    gap: 1px;
    padding: 0 1px;
}
.group + .group {
    border-left: 1px solid #bbb;
}
.cmd {
    flex-direction: column;
    justify-content: flex-start;
    padding: 15px 5px 0;
    white-space: nowrap;
}
.cmd .icon {
    margin-bottom: 2px;
}
.cmd.drop {
    padding-top: 8px;
}
.cmd.drop .caret {
    margin-top: 20px;
}
.cmd:disabled {
    color: #a0a0a0;
}

/* Command tabs and view toolbar */
.subbar {
    flex: none;
    display: flex;
    justify-content: space-between;
    height: 28px;
    padding-right: 19px;
    background: #fefefe;
}
.tabs {
    display: flex;
    border-bottom: 1px solid #666;
}
.tab {
    padding: 0 9px;
    border-right: 1px solid #666;
    background: #bcbcbc;
}
.tab.active {
    padding: 0 10px 0 11px;
    font-weight: bold;
    background: #f8f8f8;
}
.hud {
    display: flex;
    gap: 8px;
    padding: 2px 28px 0 0;
}
.hud button {
    gap: 8px;
}
.doc-controls {
    display: flex;
    gap: 12px;
    padding-top: 2px;
    color: #999;
}

/* Workspace */
.workspace {
    position: relative;
    flex: 1;
    min-height: 0;
    display: flex;
    background: #fefefe;
}
.panel {
    position: relative;
    flex: none;
    display: flex;
    flex-direction: column;
    width: 296px;
    padding-right: 2px;
    border-left: 1px solid #bbb;
    border-right: 1px solid #777;
    background: #f1f1f1;
}
.grip {
    display: flex;
    align-items: center;
    justify-content: center;
    height: 16px;
    margin: 2px 0 4px;
    border-top: 1px solid #888;
    border-bottom: 1px solid #888;
}
.panel-tabs {
    display: flex;
    height: 25px;
}
.ptab {
    width: 40px;
    border-top: 1px solid #888;
    border-right: 1px solid #888;
    background: #bcbcbc;
}
.ptab.active {
    width: 39px;
    background: #f8f8f8;
}
.more {
    margin: 0 2px 0 auto;
}
.filter {
    display: flex;
    align-items: center;
    height: 32px;
    margin: 0 2px;
    padding: 0 4px 0 2px;
    border: 1px solid #555;
    background: #fff;
}
.filter input {
    flex: 1;
    padding-left: 5px;
}
.tree {
    list-style: none;
    margin: 1px 0 0;
    padding: 0;
    overflow: hidden;
    border-bottom: 2px solid #778;
}
.tree li {
    display: flex;
    align-items: center;
    height: 24px;
    white-space: nowrap;
}
.tree .icon {
    margin-right: 4px;
}
.tree i {
    width: 6px;
    margin-right: 13px;
}
.tree .dim {
    color: #7a7a7a;
}
.lv0 {
    padding-left: 2px;
}
.lv1 {
    padding-left: 6px;
}
.lv2 {
    padding-left: 29px;
}
.lv3 {
    padding-left: 52px;
}
.lv4 {
    padding-left: 75px;
}
.hscroll {
    display: flex;
    height: 20px;
    margin-top: auto;
    margin-bottom: 1px;
    background: #e4e4e4;
}
.hscroll button {
    width: 17px;
    background: #f1f1f1;
}
.track {
    flex: 1;
    padding-left: 2px;
}
.thumb {
    width: 54%;
    height: 20px;
    background: #bababa;
}
.splitter {
    position: absolute;
    top: 410px;
    right: -9px;
    display: flex;
    align-items: center;
    width: 9px;
    height: 39px;
    border: 1px solid #777;
    border-left: none;
    background: #f8f8f8;
}
.pointer {
    position: absolute;
    left: 101px;
    top: 703px;
    width: 12px;
    height: 19px;
}
.ibeam {
    position: absolute;
    left: 231px;
    top: 54px;
    width: 8px;
    height: 18px;
}
.viewport {
    flex: 1;
    min-width: 0;
}
.scene {
    display: block;
    width: 100%;
    height: 100%;
}
.axis {
    font-family: "Liberation Sans", sans-serif;
    font-size: 14px;
}
.ax-y {
    fill: #1c6b4a;
}
.ax-x {
    fill: #b52410;
}
.ax-z {
    fill: #151c9c;
}
.task-pane {
    position: absolute;
    top: 29px;
    right: 0;
    width: 33px;
    border: 1px solid #888;
    border-right: none;
}
.task-pane button {
    width: 32px;
    height: 30px;
    background: #c8c8c8;
}
.task-pane button + button {
    border-top: 1px solid #888;
}
.task-pane .active {
    background: #fdfdfd;
}

/* Callout over the model view */
.callout {
    position: absolute;
    left: 313px;
    top: -37px;
    width: 544px;
    height: 168px;
}
.callout-shape {
    position: absolute;
    width: 544px;
    height: 168px;
}
.callout p {
    position: relative;
    margin: 0;
    padding: 26px 0 0 112px;
    text-align: center;
    font-family: Inter, "Open Sans", sans-serif;
    font-size: 50px;
    font-weight: 300;
    line-height: 58px;
    white-space: nowrap;
    color: #fff;
}

/* Bottom tabs and status bar */
.bottom-tabs {
    flex: none;
    display: flex;
    height: 21px;
    margin-right: 7px;
    border: 1px solid #666;
    border-left: none;
    font-size: 15px;
    line-height: 18px;
    background: #f2f2f2;
}
.nav-btns {
    display: flex;
    background: #8288a0;
}
.nav-btns button {
    width: 21px;
    border: 1px solid #6b7088;
}
.nav-btns path {
    fill: #666c88;
    stroke: #5b617c;
}
.btab {
    padding: 0 12px;
    border-right: 1px solid #666;
    background: #c6c6c6;
}
.btab.active {
    padding: 0 13px 0 15px;
    font-weight: bold;
    color: #000;
    background: #f4f4f4;
}
.btab:last-child {
    padding-right: 24px;
}
.status {
    flex: none;
    display: flex;
    align-items: center;
    justify-content: flex-end;
    height: 21px;
    padding: 4px 2px 0 0;
    line-height: 20px;
    background: #f5f5f5;
}
.status span {
    padding: 0 5px;
    border-right: 1px solid #ccc;
}
.status .gap {
    width: 7px;
    height: 20px;
    padding: 0;
}
.status .light {
    display: flex;
    align-items: center;
    height: 20px;
    padding-left: 19px;
}
.units {
    gap: 26px;
    width: 150px;
}
.status .icon {
    margin-left: 27px;
}
```
